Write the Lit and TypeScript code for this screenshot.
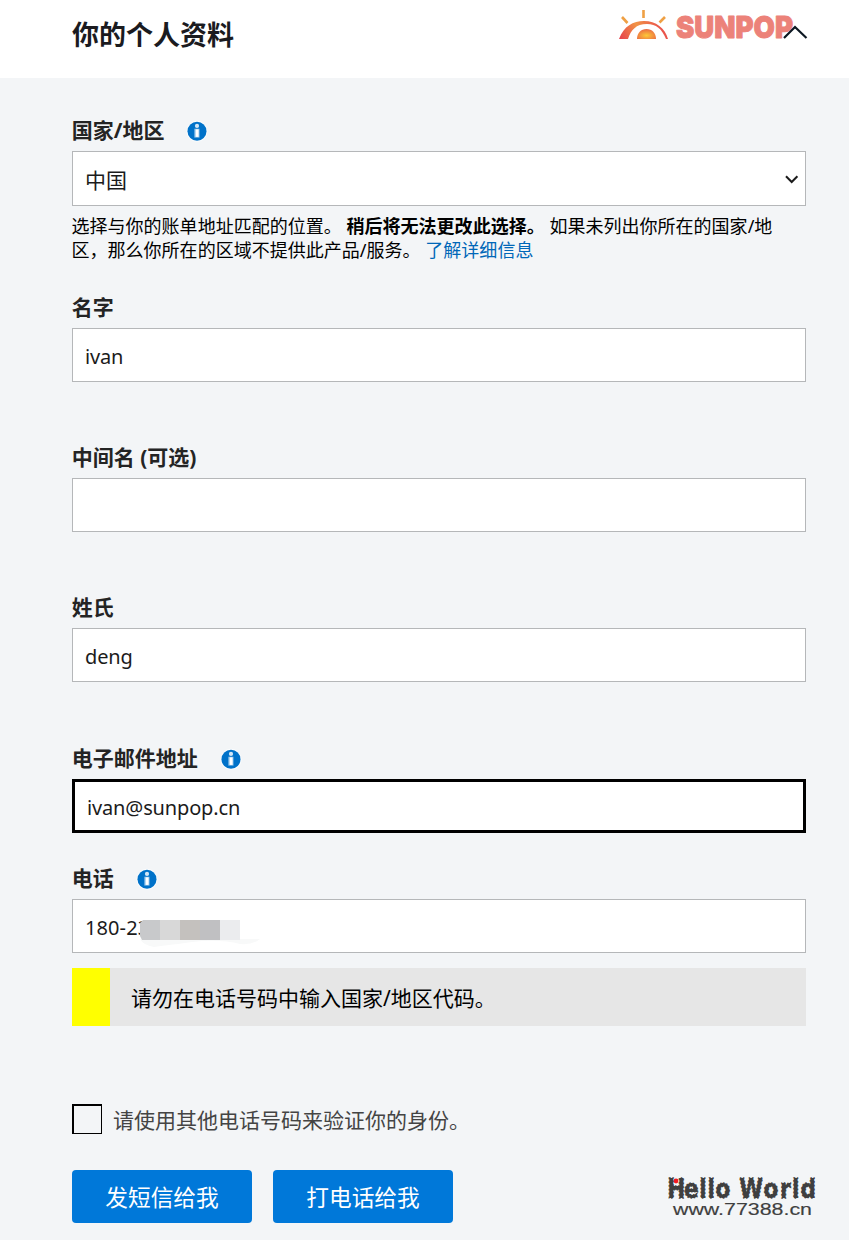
import { LitElement, html, css } from "lit";
import { customElement, property } from "lit/decorators.js";

@customElement("info-icon")
class InfoIcon extends LitElement {
  static styles = css`
    :host { display: block; width: 22px; height: 22px; }
    svg { display: block; }
  `;
  render() {
    return html`<svg width="22" height="22" viewBox="0 0 22 22">
      <circle cx="11" cy="11.300" r="10.500" fill="#fbfdfe" />
      <circle cx="11" cy="11.300" r="9.500" fill="#0072c9" />
      <circle cx="11" cy="5.900" r="2.100" fill="#d4e7f6" />
      <path d="M8.300 8.700h5.200v8.900H8.300z" fill="#8cc0e8" />
      <path d="M9.600 9.300h3v7.600h-3z" fill="#fff" />
    </svg>`;
  }
}

@customElement("form-field")
class FormField extends LitElement {
  @property() label = "";
  @property() value = "";
  @property({ type: Boolean }) info = false;
  @property({ type: Boolean }) active = false;
  @property({ type: Boolean }) dropdown = false;
  @property({ type: Boolean }) masked = false;

  static styles = css`
    :host { display: block; }
    .label {
      display: flex; align-items: center; gap: 22px; height: 40px;
      font-size: 21px; line-height: 28px; font-weight: 700; color: #242424; white-space: pre;
    }
    .label span { padding-bottom: 2px; margin-left: -0.3px; }
    .label.raised span { padding-bottom: 3px; }
    .box { position: relative; display: grid; }
    .control {
      box-sizing: border-box; width: 100%; height: 54px; margin: 0;
      padding: 3px 12px 0; border: 1px solid #b5b7b9; border-radius: 0;
      background: #fff; color: #1b1b1b; font: inherit; font-size: 20px;
      letter-spacing: -0.15px; outline: none; appearance: none;
    }
    .select { height: 55px; font-size: 21px; letter-spacing: 0; padding-top: 2px; }
    .active { border: 3px solid #000; }
    .phone { letter-spacing: 0.1px; }
    .chevron { position: absolute; right: 7px; top: 24px; }
    .mask { position: absolute; left: 66px; top: 20px; }
  `;
  render() {
    return html`
      <div class="label ${this.dropdown ? "raised" : ""}"><span>${this.label}</span>${this.info ? html`<info-icon></info-icon>` : ""}</div>
      <div class="box">
        ${this.dropdown
          ? html`<select class="control select"><option>${this.value}</option></select>
              <svg class="chevron" width="14" height="10" viewBox="0 0 14 10">
                <path d="M1 1.200 6.700 7l5.700-5.800" fill="none" stroke="#1b1b1b" stroke-width="2" />
              </svg>`
          : html`<input class="control ${this.active ? "active" : ""} ${this.masked ? "phone" : ""}" .value=${this.value} />`}
        ${this.masked
          ? html`<svg class="mask" width="124" height="30" viewBox="0 0 124 30">
              <path d="M2 20h120q-7 6-20 5-15-4-38-3-12 1-24 3-10 1-24 3Q5 26 2 20z" fill="#f8f9f9" />
              <path d="M5 1h17v20H4L2 17V4z" fill="#c8c9cb" />
              <path d="M22 1h20v20H22z" fill="#d8d8d8" />
              <path d="M42 1h20v20H42z" fill="#c4c1be" />
              <path d="M62 1h20v20H62z" fill="#c0c0c2" />
              <path d="M82 1h20v20H82z" fill="#ebecee" />
            </svg>`
          : ""}
      </div>`;
  }
}

@customElement("brand-logo")
class BrandLogo extends LitElement {
  static styles = css`
    :host { display: block; }
    svg { display: block; overflow: visible; }
    .name { font-family: "Inter", sans-serif; font-weight: 900; font-size: 30.5px; }
  `;
  render() {
    return html`<svg width="192" height="34" viewBox="0 0 192 34">
      <defs>
        <linearGradient id="arc" x1="0" x2="1" y1="1" y2="0.8">
          <stop offset="0" stop-color="#e63e4c" /><stop offset="0.5" stop-color="#f19446" />
          <stop offset="1" stop-color="#e94e4c" />
        </linearGradient>
        <radialGradient id="sun" cx="0.5" cy="0.65" r="0.65">
          <stop offset="0" stop-color="#fcc838" /><stop offset="1" stop-color="#eb6844" />
        </radialGradient>
      </defs>
      <path d="M0 30C5 17 14 12 25 12c12 0 21 7 24 18h-2C43 20 37 15 28 15 17 15 12 21 9 30z" fill="url(#arc)" />
      <path d="M18 30c0-6 4-10 9.500-10S37 24 37 30z" fill="url(#sun)" />
      <path d="M24.500 1v8M3 8l5.500 6M46 8l-5.500 5.500" stroke="#efa044" stroke-width="2.600" fill="none" />
      <text class="name" x="57" y="29.300" fill="#ec8279" stroke="#ec8279" stroke-width="0.900" stroke-linejoin="round"
        textLength="117" lengthAdjust="spacingAndGlyphs">SUNPOP</text>
      <path d="m165 29 11-11L187.500 29" fill="none" stroke="#0d1822" stroke-width="2.200" />
    </svg>`;
  }
}

@customElement("site-mark")
class SiteMark extends LitElement {
  static styles = css`
    :host { display: block; }
    svg { display: block; overflow: visible; }
    .hello { font-family: "DejaVu Sans", sans-serif; font-weight: 700; font-size: 27px; }
    .url { font-family: "Liberation Sans", sans-serif; font-size: 17px; }
  `;
  render() {
    return html`<svg width="154" height="48" viewBox="0 0 154 48">
      <g fill="#3f3f3f" stroke="#3f3f3f">
        <text class="hello" transform="scale(0.8 1)" y="23.500" stroke-width="1.400" stroke-dasharray="1.800 2"
          x="-1 20 39 49.500 59.500 75 89 119.500 140 155 165.500">Hello World</text>
        <text class="url" x="5" y="41" stroke-width="0.150" textLength="139" lengthAdjust="spacingAndGlyphs">www.77388.cn</text>
      </g>
      <circle cx="8" cy="7" r="2.400" fill="#f01b22" />
    </svg>`;
  }
}

@customElement("app-root")
class AppRoot extends LitElement {
  static styles = css`
    :host {
      display: block; position: relative; height: 1240px; overflow: hidden;
      background: #f3f5f7; color: #000;
      font-family: "Noto Sans", "Noto Sans CJK SC", sans-serif;
    }
    .header {
      box-sizing: border-box; display: flex; justify-content: space-between; height: 78px;
      padding: 9px 38px 0 72px; background: #fff;
    }
    .title { margin: 0; font-size: 27px; line-height: 52px; color: #1b1b1f; }
    .form { padding: 33px 43px 0 72px; }
    .help { margin: 8px 0 25px -0.5px; height: 49px; font-size: 18px; line-height: 24px; letter-spacing: 0.02px; white-space: nowrap; }
    .link { color: #0067b8; text-decoration: none; }
    .gap { margin-bottom: 56px; }
    .email { margin: 57px 0 26px; }
    .notice {
      display: flex; align-items: center; height: 58px; margin-top: 15px;
      border-left: 38px solid #ff0; box-sizing: border-box; padding: 0 0 0 21px;
      background: #e6e6e6; font-size: 21px;
    }
    .verify { display: flex; align-items: center; gap: 11px; margin-top: 78px; height: 30px; font-size: 21px; color: #444; }
    .check { appearance: none; box-sizing: border-box; width: 30px; height: 30px; margin: 0; border: 2px solid #000; border-width: 2px 1px 1px 2px; }
    .actions { display: flex; gap: 21px; margin-top: 36px; }
    .button {
      width: 180px; height: 53px; padding: 0 0 1px; border: 0; border-radius: 4px;
      background: #0078d9; color: #fff; font: inherit; font-size: 22.7px;
    }
    .mark { position: absolute; left: 668px; top: 1174px; }
  `;
  render() {
    return html`
      <header class="header" lang="zh-CN">
        <h1 class="title">你的个人资料</h1>
        <brand-logo></brand-logo>
      </header>
      <main class="form" lang="zh-CN">
        <form-field label="国家/地区" value="中国" info dropdown></form-field>
        <div class="help">
          选择与你的账单地址匹配的位置。 <b>稍后将无法更改此选择。</b> 如果未列出你所在的国家/地<br />区，那么你所在的区域不提供此产品/服务。
          <a class="link" href="#">了解详细信息</a>
        </div>
        <form-field class="gap" label="名字" value="ivan"></form-field>
        <form-field class="gap" label="中间名 (可选)"></form-field>
        <form-field label="姓氏" value="deng"></form-field>
        <form-field class="email" label="电子邮件地址" value="ivan@sunpop.cn" info active></form-field>
        <form-field label="电话" value="180-23" info masked></form-field>
        <div class="notice">请勿在电话号码中输入国家/地区代码。</div>
        <label class="verify"><input class="check" type="checkbox" />请使用其他电话号码来验证你的身份。</label>
        <div class="actions">
          <button class="button">发短信给我</button>
          <button class="button">打电话给我</button>
        </div>
      </main>
      <site-mark class="mark"></site-mark>`;
  }
}
